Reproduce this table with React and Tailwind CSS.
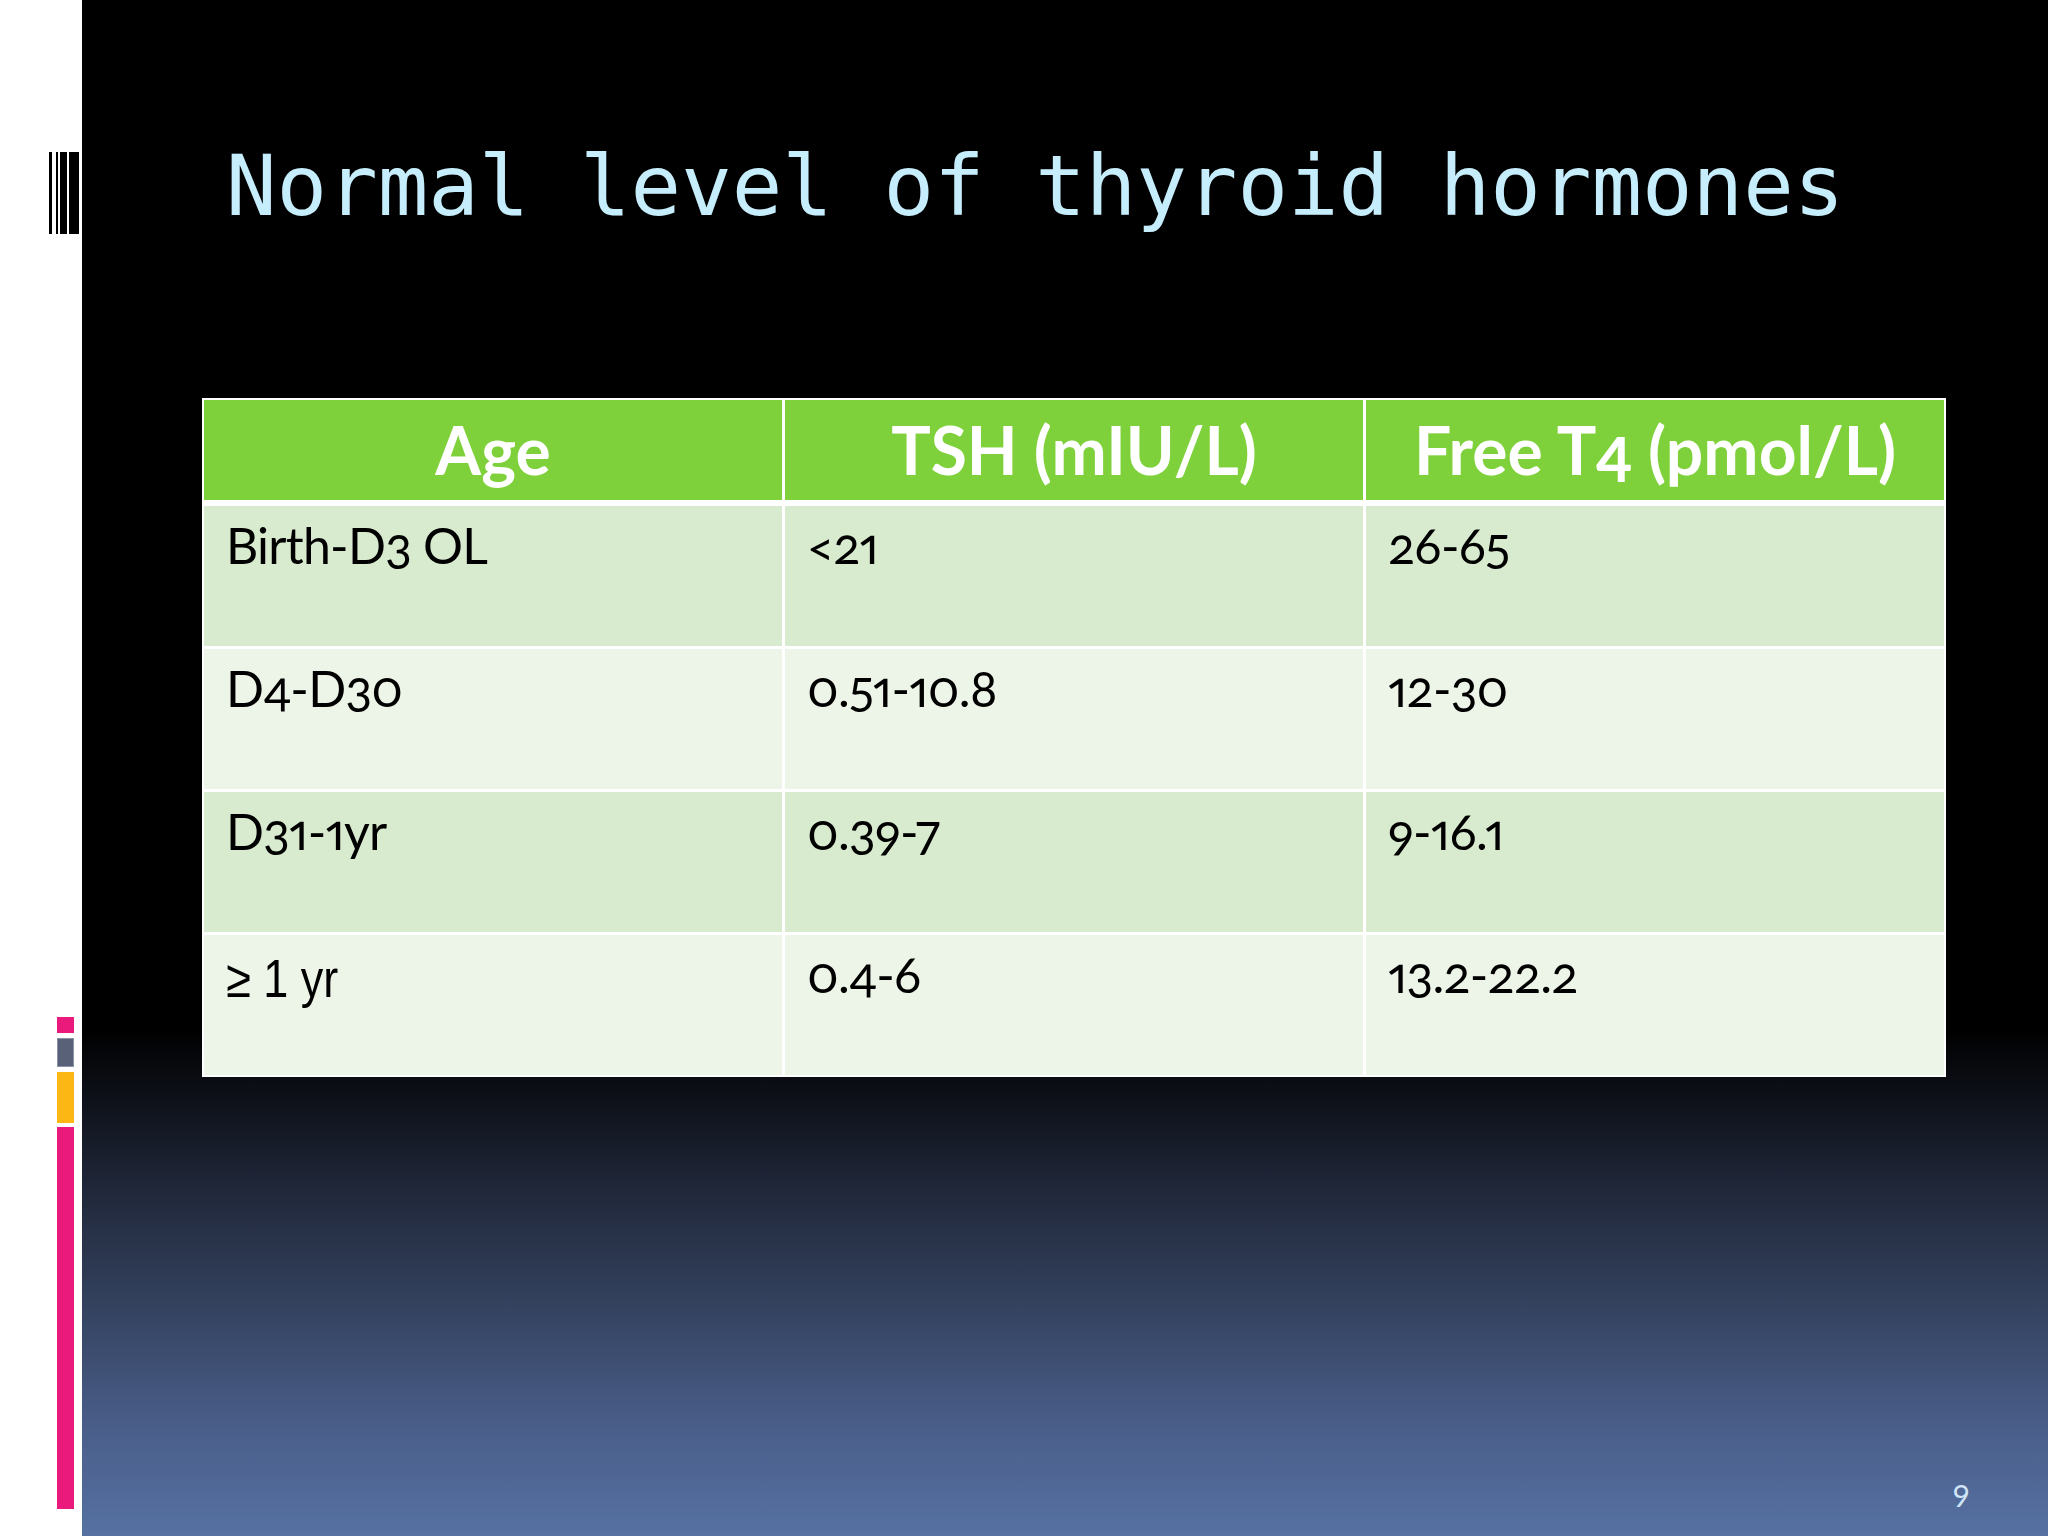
const rows = [
  { age: "Birth-D3 OL", tsh: "<21", t4: "26-65", bg: "bg-[#d9ebcf]" },
  { age: "D4-D30", tsh: "0.51-10.8", t4: "12-30", bg: "bg-[#ecf5e7]" },
  { age: "D31-1yr", tsh: "0.39-7", t4: "9-16.1", bg: "bg-[#d9ebcf]" },
  { age: "≥ 1 yr", tsh: "0.4-6", t4: "13.2-22.2", bg: "bg-[#ecf5e7]", narrow: true },
];

function Cell({ children, bg, narrow }) {
  return (
    <div className={`w-[578px] h-[140px] ${bg} pl-[22px]`}>
      {narrow ? (
        <div className="pt-[17px] text-[53px] leading-none text-black font-['Liberation_Sans_Narrow','Liberation_Sans',sans-serif]">
          <span className="inline-block origin-left scale-x-[0.85] whitespace-pre">{children}</span>
        </div>
      ) : (
        <div className="pt-[14px] text-[50px] leading-none text-black tracking-[-0.015em] oldstyle-nums proportional-nums font-['Lato',sans-serif]">
          {children}
        </div>
      )}
    </div>
  );
}

export default function App() {
  return (
    <div className="w-[2048px] h-[1536px] flex overflow-hidden">
      {/* left white strip */}
      <div className="w-[82px] h-full bg-white flex flex-col shrink-0">
        <div className="flex h-[82px] mt-[152px]">
          <div className="w-[3px] ml-[49px] bg-black" />
          <div className="w-[2px] ml-[4px] bg-black" />
          <div className="w-[7px] ml-[2px] bg-black" />
          <div className="w-[10px] ml-[2px] bg-black" />
        </div>
        <div className="flex flex-col ml-[57px] w-[17px] mt-[783px]">
          <div className="h-[16px] bg-[#ea1a7c]" />
          <div className="h-[29px] mt-[5px] bg-[#586178] border border-[#8a92a4]" />
          <div className="h-[51px] mt-[5px] bg-[#fdb714]" />
          <div className="h-[382px] mt-[4px] bg-[#ea1a7c]" />
        </div>
      </div>

      {/* slide body */}
      <div className="flex-1 h-full flex flex-col pt-[144px] bg-[linear-gradient(to_bottom,#000_0%,#000_67%,#1c2232_76%,#34425f_85%,#4a5e8a_93%,#5671a2_100%)]">
        <h1 className="pl-[144px] text-[84px] leading-none whitespace-pre text-[#c6edfb] font-['DejaVu_Sans_Mono',monospace]">
          Normal level of thyroid hormones
        </h1>

        <div className="ml-[120px] mt-[170px] w-[1744px] bg-white p-[2px] flex flex-col">
          <div className="flex gap-[3px]">
            {["Age", "TSH (mIU/L)", "Free T4 (pmol/L)"].map((h) => (
              <div
                key={h}
                className="w-[578px] h-[100px] bg-[#7fd13b] flex items-center justify-center text-white font-bold text-[66px] leading-none oldstyle-nums font-['Lato',sans-serif]"
              >
                {h}
              </div>
            ))}
          </div>
          <div className="flex flex-col gap-[3px] mt-[6px]">
            {rows.map((r) => (
              <div key={r.age} className="flex gap-[3px]">
                <Cell bg={r.bg} narrow={r.narrow}>{r.age}</Cell>
                <Cell bg={r.bg}>{r.tsh}</Cell>
                <Cell bg={r.bg}>{r.t4}</Cell>
              </div>
            ))}
          </div>
        </div>

        <div className="mt-auto flex justify-end pr-[78px] pb-[26px]">
          <span className="text-[30px] leading-none text-[#cfe5f6] font-['Lato',sans-serif]">9</span>
        </div>
      </div>
    </div>
  );
}
